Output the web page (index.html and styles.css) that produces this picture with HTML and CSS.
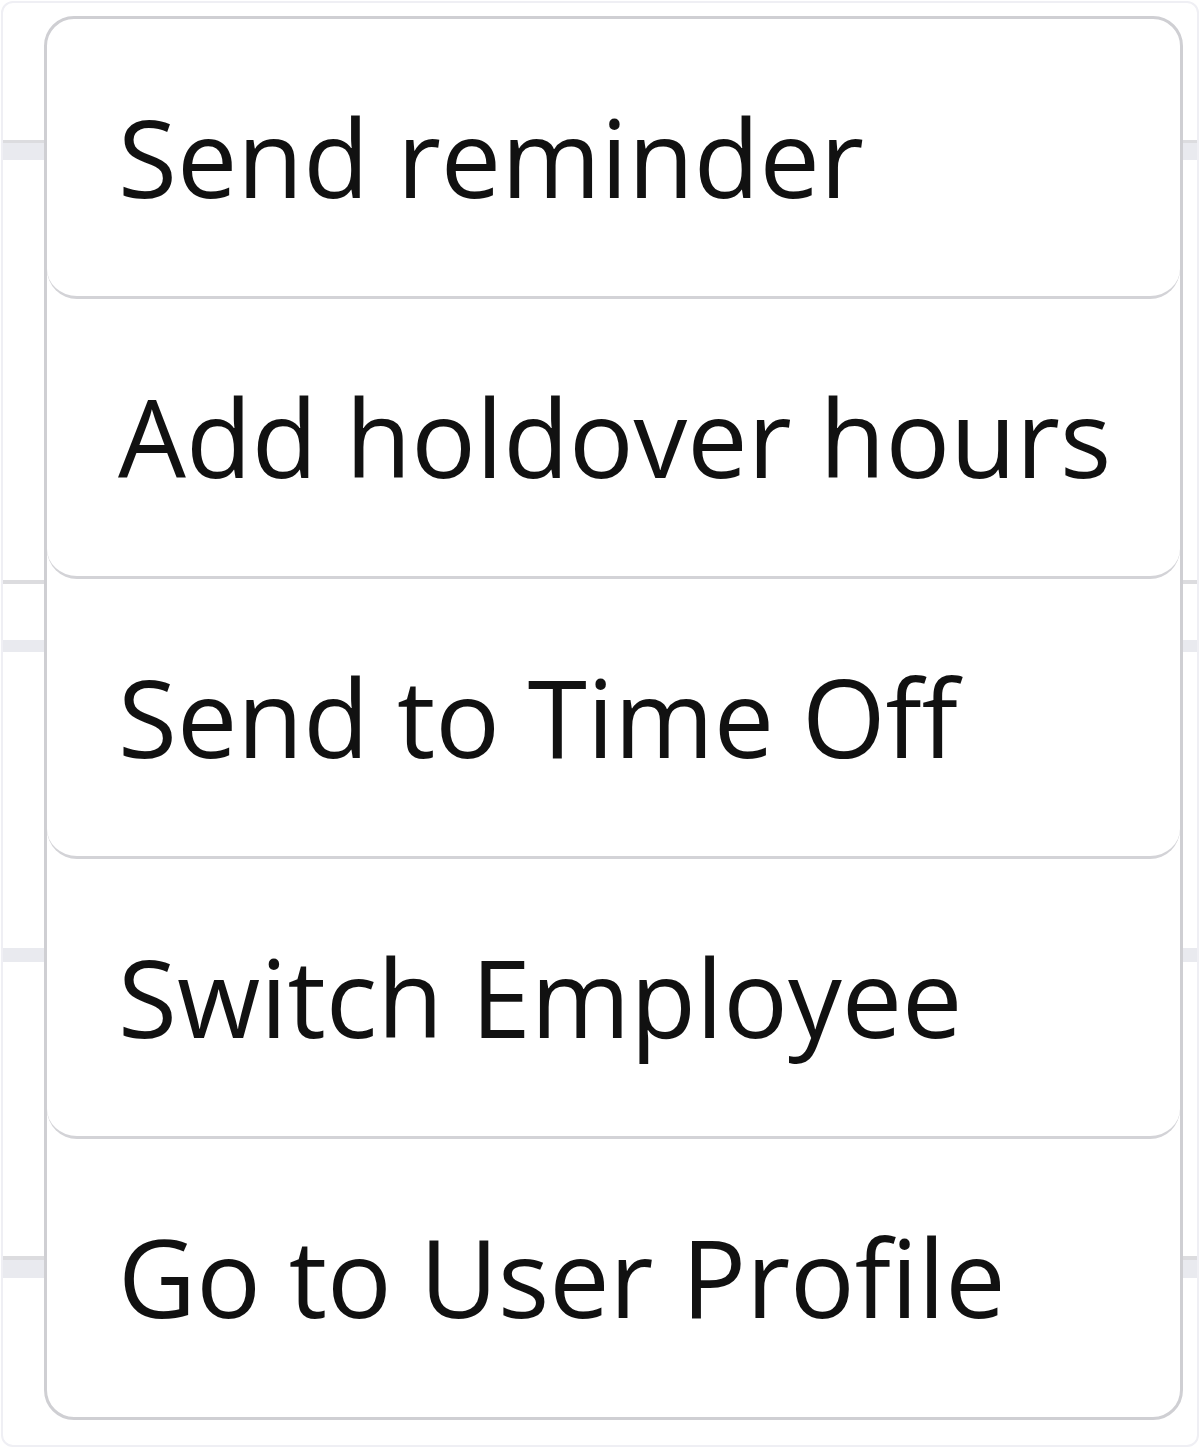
FILE: index.html
```html
<!DOCTYPE html>
<html>
<head>
<meta charset="utf-8">
<link rel="stylesheet" href="styles.css">
</head>
<body>
<div class="frame">
  <div class="rows">
    <div class="row r1"></div>
    <div class="row r2"></div>
    <div class="row r3"></div>
    <div class="row r4"></div>
    <div class="row r5"></div>
  </div>
  <ul class="menu">
    <li class="item">Send reminder</li>
    <li class="item">Add holdover hours</li>
    <li class="item">Send to Time Off</li>
    <li class="item">Switch Employee</li>
    <li class="item last">Go to User Profile</li>
  </ul>
</div>
</body>
</html>
```
FILE: styles.css
```css
html, body {
  margin: 0;
  padding: 0;
  background: #ffffff;
}
body {
  width: 1200px;
  height: 1448px;
  overflow: hidden;
  font-family: "Open Sans", "Noto Sans", sans-serif;
}
.frame {
  position: relative;
  margin: 1px;
  width: 1198px;
  height: 1446px;
  box-sizing: border-box;
  border: 2px solid #efeff4;
  border-radius: 12px;
  overflow: hidden;
}
.rows {
  display: flex;
  flex-direction: column;
}
.row {
  box-sizing: border-box;
}
.r1 {
  margin-top: 137px;
  height: 20px;
  border-top: 3px solid #dcdcdf;
  background: #e9eaef;
}
.r2 {
  margin-top: 420px;
  height: 4px;
  background: #dcdcdf;
}
.r3 {
  margin-top: 56px;
  height: 12px;
  background: #e9eaef;
}
.r4 {
  margin-top: 296px;
  height: 14px;
  background: #e9eaef;
}
.r5 {
  margin-top: 294px;
  height: 22px;
  border-top: 4px solid #dcdcdf;
  background: #e9eaef;
}
.menu {
  position: absolute;
  left: 41px;
  top: 13px;
  width: 1139px;
  height: 1404px;
  margin: 0;
  padding: 0;
  list-style: none;
  box-sizing: border-box;
  background: #ffffff;
  border: 3px solid #cfcfd3;
  border-radius: 30px;
  display: flex;
  flex-direction: column;
}
.item {
  height: 280px;
  box-sizing: border-box;
  border-bottom: 3px solid #d3d3d7;
  border-radius: 30px;
  display: flex;
  align-items: center;
  padding-left: 71px;
  padding-bottom: 4px;
  font-size: 107.5px;
  color: #111111;
  white-space: nowrap;
}
.item.last {
  border-bottom: none;
  height: 278px;
}
```
